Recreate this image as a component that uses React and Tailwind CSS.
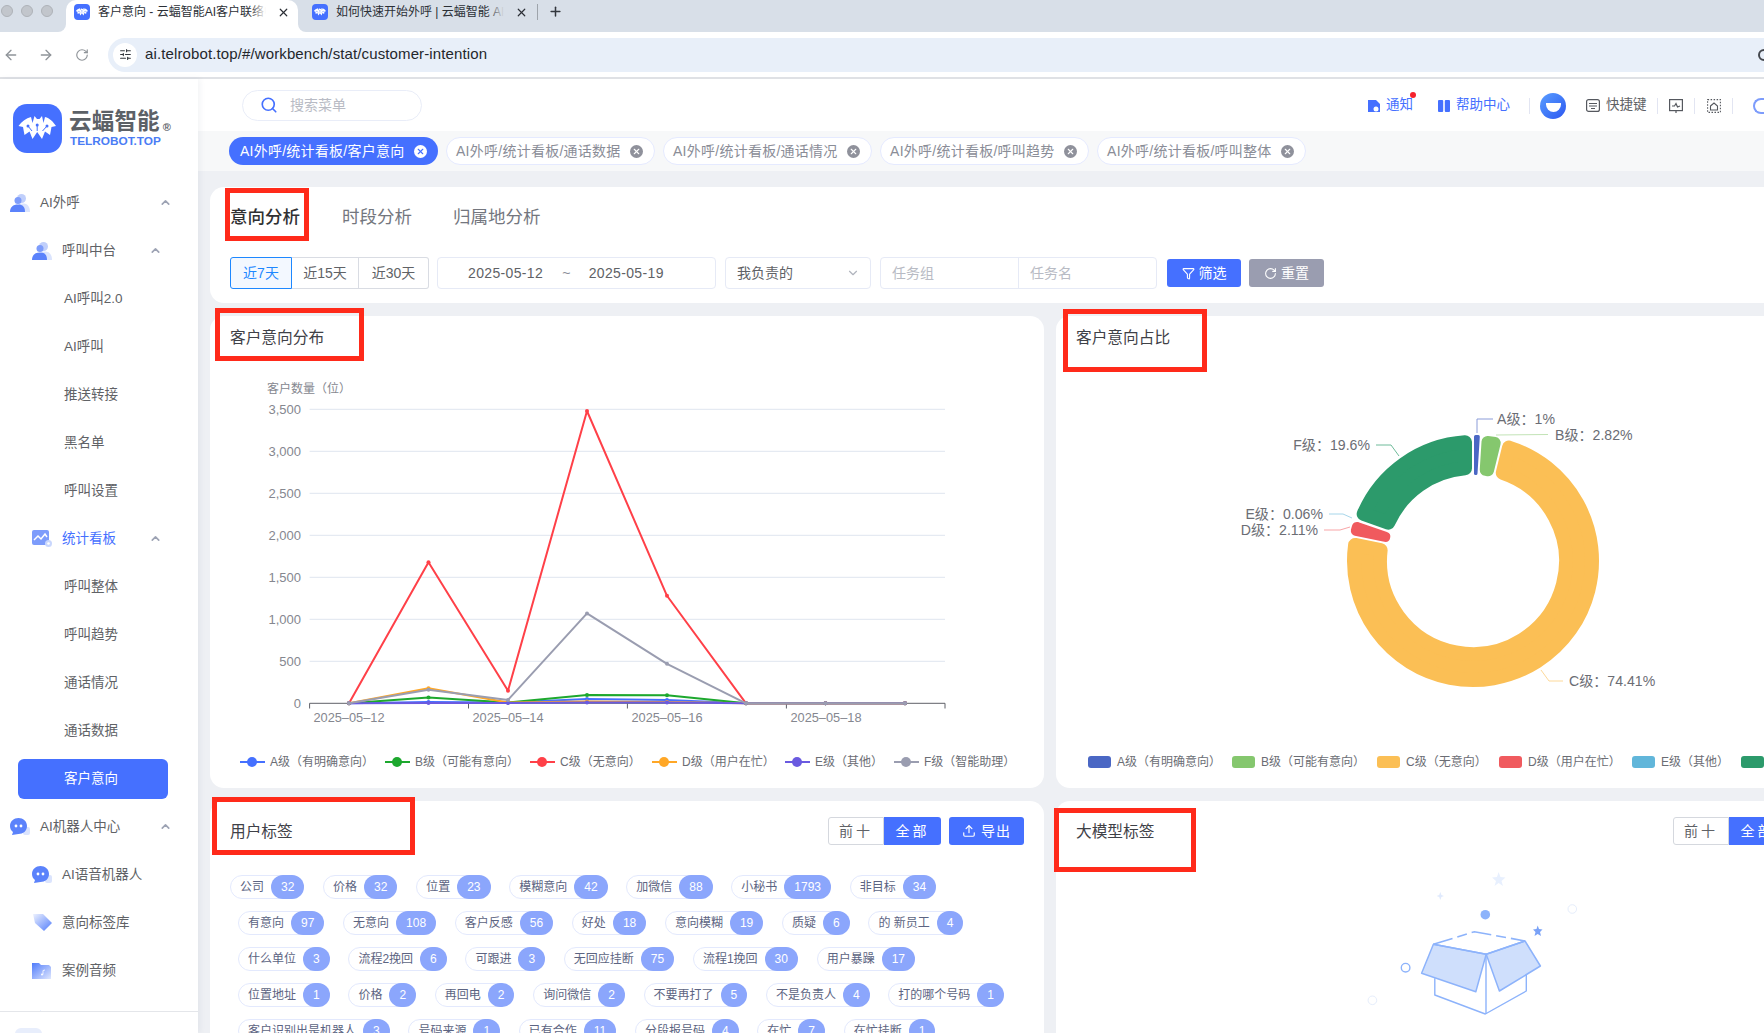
import React from "react";
import { ArrowLeft, ArrowRight, RotateCw, X, Plus, ChevronUp, ChevronDown, Filter, Upload, Search, SlidersHorizontal } from "lucide-react";

const FONT = '"Liberation Sans","Noto Sans CJK SC",sans-serif';

function Bat({ size = 49, radius = 14 }) {
  return (
    <svg width={size} height={size} viewBox="0 0 49 49" className="shrink-0">
      <rect x="0" y="0" width="49" height="49" rx={radius} fill="#4570ff" />
      <path d="M5.5 22 C9 17 13 14.5 18 13 L19.5 19 L21.5 12 L24 15 L26.5 15 L29 12 L30.5 19 L32 13 C37 14.5 39.5 17 43 22 L38.5 23 L37 31 L32 27.5 L29 35 L24.2 28 L19.5 35 L16.5 27.5 L11.5 31 L10 23 Z" fill="#fff" />
      <path d="M15 22 L19 27 M34 22 L29.5 27 M24.2 21 V27" stroke="#4570ff" strokeWidth="1" fill="none" />
      <circle cx="15" cy="22" r="1.5" fill="#4570ff" />
      <circle cx="34" cy="22" r="1.5" fill="#4570ff" />
      <circle cx="24.2" cy="21" r="1.5" fill="#4570ff" />
    </svg>
  );
}

function People() {
  return (
    <svg width="20" height="20" viewBox="0 0 20 20" className="shrink-0">
      <circle cx="11.5" cy="5.5" r="4.5" fill="#c0cffb" />
      <path d="M6 19 C6 12 9 10.5 13 10.5 C17 10.5 20 13 20 19 Z" fill="#dbe4fd" />
      <circle cx="8" cy="7.5" r="3.5" fill="#7d9cfb" />
      <path d="M0 19 C0 14 3 11.5 8 11.5 C13 11.5 15 14 15 19 Z" fill="#5b82fb" />
    </svg>
  );
}
function Stat() {
  return (
    <svg width="20" height="18" viewBox="0 0 20 18" className="shrink-0">
      <rect x="0" y="0" width="17" height="15" rx="2" fill="#7d9cfb" />
      <path d="M2 10 L6 6 L9 9 L13 4 L15 7" stroke="#fff" strokeWidth="1.5" fill="none" />
      <circle cx="16.5" cy="13.5" r="3.5" fill="#c9d7fd" />
      <circle cx="16.5" cy="13.5" r="1.3" fill="#fff" />
    </svg>
  );
}
function Robot() {
  return (
    <svg width="20" height="18" viewBox="0 0 20 18" className="shrink-0">
      <rect x="13" y="9" width="7" height="8" rx="2" fill="#dbe4fd" />
      <path d="M8.5 0 C13 0 17 3 17 8 C17 13 13 16 8.5 16 L2 17 L3 14 C1 12.5 0 10.5 0 8 C0 3 4 0 8.5 0 Z" fill="#5b82fb" />
      <circle cx="6" cy="8" r="1.4" fill="#fff" />
      <circle cx="11" cy="8" r="1.4" fill="#fff" />
    </svg>
  );
}
function TagIcon() {
  return (
    <svg width="21" height="18" viewBox="0 0 21 18" className="shrink-0">
      <defs>
        <linearGradient id="tg" x1="0" y1="0" x2="1" y2="1">
          <stop offset="0" stopColor="#eef2fe" />
          <stop offset="1" stopColor="#4f7bfb" />
        </linearGradient>
      </defs>
      <path d="M1 0 L11 0 L20 9 L12 17 L3 9 Z" fill="url(#tg)" />
    </svg>
  );
}
function FolderIcon() {
  return (
    <svg width="19" height="16" viewBox="0 0 19 16" className="shrink-0">
      <defs>
        <linearGradient id="fg" x1="0" y1="0" x2="1" y2="1">
          <stop offset="0" stopColor="#4f7bfb" />
          <stop offset="1" stopColor="#dfe7fe" />
        </linearGradient>
      </defs>
      <path d="M0 0 L7 0 L9 2 L17 2 L19 4 L19 16 L0 16 Z" fill="url(#fg)" />
      <circle cx="10" cy="11.5" r="1" fill="#fff" />
      <path d="M11 11.5 L11 7.5 L13 7" stroke="#fff" strokeWidth="0.8" fill="none" />
    </svg>
  );
}

const menu = [
  { t: "AI外呼", l: 1, icon: <People />, open: true },
  { t: "呼叫中台", l: 2, icon: <People />, open: true },
  { t: "AI呼叫2.0", l: 3 },
  { t: "AI呼叫", l: 3 },
  { t: "推送转接", l: 3 },
  { t: "黑名单", l: 3 },
  { t: "呼叫设置", l: 3 },
  { t: "统计看板", l: 2, icon: <Stat />, open: true, blue: true },
  { t: "呼叫整体", l: 3 },
  { t: "呼叫趋势", l: 3 },
  { t: "通话情况", l: 3 },
  { t: "通话数据", l: 3 },
  { t: "客户意向", l: 3, active: true },
  { t: "AI机器人中心", l: 1, icon: <Robot />, open: true },
  { t: "AI语音机器人", l: 2, icon: <Robot /> },
  { t: "意向标签库", l: 2, icon: <TagIcon /> },
  { t: "案例音频", l: 2, icon: <FolderIcon /> },
];

function MenuRow({ it }) {
  if (it.l === 3) {
    if (it.active) {
      return (
        <div className="h-[48px] flex items-center pl-[18px]">
          <div className="w-[150px] h-[40px] rounded-[6px] bg-[#4570ff] text-white flex items-center pl-[46px] text-[13.5px]">{it.t}</div>
        </div>
      );
    }
    return <div className="h-[48px] flex items-center pl-[64px] text-[13.5px] text-[#606266]">{it.t}</div>;
  }
  const pad = it.l === 1 ? "pl-[10px]" : "pl-[32px]";
  return (
    <div className={`h-[48px] flex items-center ${pad} relative text-[13.5px] ${it.blue ? "text-[#4570ff]" : "text-[#606266]"}`}>
      <div className="w-[30px] flex items-center">{it.icon}</div>
      <span>{it.t}</span>
      {it.open && (
        <ChevronUp size={13} strokeWidth={3} className={`absolute top-[17px] text-[#9da3b4] ${it.l === 1 ? "left-[159px]" : "left-[149px]"}`} />
      )}
    </div>
  );
}

function Sidebar() {
  return (
    <aside className="w-[198px] shrink-0 bg-white flex flex-col z-10 shadow-[2px_0_6px_rgba(40,50,80,0.06)] h-full">
      <div className="h-[100px] shrink-0 flex items-center pl-[13px] pb-[1px]">
        <Bat />
        <div className="ml-[7px] flex flex-col mt-[1px]">
          <div className="flex items-end leading-none">
            <span className="text-[22.5px] font-bold text-[#5c6167] tracking-[0.2px] leading-[24px]">云蝠智能</span>
            <span className="text-[11px] font-bold text-[#5c6167] ml-[3px] leading-[14px]">®</span>
          </div>
          <span className="text-[11.8px] font-bold text-[#4a7cf5] leading-[13px] mt-[1px] ml-[1px]">TELROBOT.TOP</span>
        </div>
      </div>
      <div className="flex-1 overflow-hidden min-h-0">
        {menu.map((it) => <MenuRow key={it.t} it={it} />)}
        <div className="h-[48px] flex items-center pl-[32px]">
          <svg width="20" height="20" viewBox="0 0 20 20"><path d="M3 10 L9 1 L9 20 Z" fill="#cdd9fd" /></svg>
        </div>
      </div>
      <div className="h-[22px] shrink-0 border-t border-[#e4e6ea] pl-[15px] pt-[16px] overflow-hidden">
        <div className="w-[27px] h-[20px] rounded-t-[6px] bg-[#e8eefc]"></div>
      </div>
    </aside>
  );
}

function BrowserTab({ title, active, width, textW }) {
  return (
    <div className={`relative h-[32px] flex items-center pb-[8px] shrink-0 ${active ? "bg-white rounded-t-[10px]" : ""}`} style={{ width }}>
      {active && (
        <>
          <div className="absolute bottom-0 -left-[8px] w-[8px] h-[8px] bg-white"><div className="w-full h-full bg-[#d8dfe8] rounded-br-[8px]"></div></div>
          <div className="absolute bottom-0 -right-[8px] w-[8px] h-[8px] bg-white"><div className="w-full h-full bg-[#d8dfe8] rounded-bl-[8px]"></div></div>
        </>
      )}
      <div className="ml-[8px]"><Bat size={16} radius={12} /></div>
      <div className="ml-[8px] overflow-hidden whitespace-nowrap text-[12px] text-[#2b2f36] relative" style={{ width: textW }}>
        {title}
        <div className={`absolute right-0 top-0 bottom-0 w-[16px] bg-gradient-to-r from-transparent ${active ? "to-white" : "to-[#d8dfe8]"}`}></div>
      </div>
      <X size={13} strokeWidth={2.2} className="text-[#2b2f36] ml-[11px]" />
    </div>
  );
}

function Chrome() {
  return (
    <>
      <div className="h-[32px] bg-[#d8dfe8] flex items-start shrink-0">
        <div className="flex items-center gap-[8px] pl-[1px] h-[22px] w-[66px]">
          {[0, 1, 2].map((i) => <span key={i} className="w-[12px] h-[12px] rounded-full bg-[#c2c6cc] border border-[#aeb2b8]"></span>)}
        </div>
        <BrowserTab active title="客户意向 - 云蝠智能AI客户联络中心" width={232} textW={168} />
        <div className="w-[6px]"></div>
        <BrowserTab title="如何快速开始外呼 | 云蝠智能 AI客户" width={234} textW={168} />
        <div className="w-px h-[16px] bg-[#9ea4ab] mt-[4px] ml-[-1px]"></div>
        <Plus size={15} strokeWidth={2.4} className="text-[#33373d] ml-[10px] mt-[4px]" />
      </div>
      <div className="h-[47px] bg-white border-b-2 border-[#dfe1e5] flex items-center shrink-0 relative">
        <ArrowLeft size={16} className="text-[#8f9499] ml-[3px]" />
        <ArrowRight size={16} className="text-[#8f9499] ml-[19px]" />
        <RotateCw size={14} className="text-[#8f9499] ml-[21px]" />
        <div className="ml-[19px] flex-1 h-[34px] rounded-l-full bg-[#e8eff9] flex items-center pl-[5px]">
          <div className="w-[24px] h-[24px] rounded-full bg-white flex items-center justify-center">
            <SlidersHorizontal size={13} className="text-[#33373d]" />
          </div>
          <span className="ml-[8px] text-[15px] tracking-[0.12px] text-[#24272c]">ai.telrobot.top/#/workbench/stat/customer-intention</span>
          <div className="ml-auto w-[12px] h-[12px] rounded-full border-2 border-[#44484e] mr-[-6px]"></div>
        </div>
      </div>
    </>
  );
}

function Sep() {
  return <span className="w-px h-[16px] bg-[#e2e5f2] shrink-0"></span>;
}

function TopBar() {
  return (
    <div className="h-[52px] bg-white flex items-center shrink-0 pl-[44px] overflow-hidden">
      <div className="w-[180px] h-[31px] rounded-full border border-[#e9edf8] flex items-center pl-[17px] shrink-0">
        <Search size={18} strokeWidth={2.2} className="text-[#4570ff]" />
        <span className="ml-[12px] text-[14px] text-[#b8bbc4]">搜索菜单</span>
      </div>
      <div className="ml-auto flex items-center shrink-0 text-[13.5px] pt-[1px]">
        <div className="w-[70px] flex items-center text-[#4570ff] relative">
          <svg width="12" height="12" viewBox="0 0 12 12"><path d="M0 0 H8 L12 4 V12 H0 Z" fill="#4570ff" /><circle cx="8" cy="9" r="2.5" fill="#fff" /></svg>
          <span className="ml-[6px]">通知</span>
          <span className="absolute left-[42px] -top-[3px] w-[6px] h-[6px] rounded-full bg-[#f5222d]"></span>
        </div>
        <div className="w-[91px] flex items-center text-[#4570ff]">
          <svg width="12" height="12" viewBox="0 0 12 12"><rect x="0" y="0" width="5.2" height="12" rx="1" fill="#4570ff" /><rect x="6.8" y="0" width="5.2" height="12" rx="1" fill="#4570ff" /></svg>
          <span className="ml-[6px]">帮助中心</span>
        </div>
        <Sep />
        <div className="ml-[10px] w-[26px] h-[26px] rounded-full bg-gradient-to-br from-[#5b9dff] to-[#2f55f0] flex items-center justify-center">
          <span className="w-[15px] h-[9px] rounded-b-full rounded-t-[5px] bg-white mt-[3px]"></span>
        </div>
        <div className="ml-[10px]"><Sep /></div>
        <div className="ml-[10px] w-[71px] flex items-center text-[#606266]">
          <svg width="14" height="13" viewBox="0 0 14 13" fill="none" stroke="#55585e" strokeWidth="1.2"><rect x="0.6" y="0.6" width="12.8" height="11.8" rx="2" /><path d="M3 4.5 H11 M3 7 H11 M5 9.5 H9" /></svg>
          <span className="ml-[6px]">快捷键</span>
        </div>
        <Sep />
        <div className="ml-[11px] mr-[11px]">
          <svg width="14" height="14" viewBox="0 0 14 14" fill="none" stroke="#55585e" strokeWidth="1.2"><rect x="0.6" y="0.6" width="12.8" height="11" /><path d="M3 7 L5.5 7 L7 4.5 L8.5 8 L11 7 M7 12 V14" /></svg>
        </div>
        <Sep />
        <div className="ml-[12px] mr-[11px]">
          <svg width="14" height="14" viewBox="0 0 14 14" fill="none" stroke="#55585e" strokeWidth="1.1"><rect x="0.6" y="0.6" width="12.8" height="12.8" strokeDasharray="1.5 1.5" /><path d="M3.5 7 L7 4 L10.5 7 V11 H3.5 Z" /></svg>
        </div>
        <Sep />
        <div className="ml-[19px]"><Sep /></div>
        <div className="ml-[1px] w-[11px] h-[16px] rounded-l-full border-l-2 border-y-2 border-[#7d9cfb]"></div>
      </div>
    </div>
  );
}

const tags = ["AI外呼/统计看板/客户意向", "AI外呼/统计看板/通话数据", "AI外呼/统计看板/通话情况", "AI外呼/统计看板/呼叫趋势", "AI外呼/统计看板/呼叫整体"];

function TagBar() {
  return (
    <div className="h-[40px] bg-[#f7f8f9] flex items-center gap-[8.5px] pl-[31px] shrink-0">
      {tags.map((t, i) => (
        <div key={t} className={`h-[28px] rounded-full flex items-center text-[14px] tracking-[0.25px] whitespace-nowrap ${i === 0 ? "pl-[11px] pr-[11px] bg-[#4570ff] text-white" : "pl-[9px] pr-[11px] bg-white border border-[#e5eaff] text-[#8a8d97]"}`}>
          {t}
          <span className={`ml-[9px] w-[13px] h-[13px] rounded-full flex items-center justify-center ${i === 0 ? "bg-white text-[#4570ff]" : "bg-[#8f919b] text-white"}`}>
            <X size={9} strokeWidth={3} />
          </span>
        </div>
      ))}
    </div>
  );
}

function FilterCard() {
  return (
    <div className="w-[1600px] h-[116px] bg-white rounded-l-[14px] pl-[20px] shrink-0">
      <div className="h-[60px] flex items-center text-[17.5px] text-[#73767e]">
        <span className="text-[#303133] font-medium">意向分析</span>
        <span className="ml-[42px]">时段分析</span>
        <span className="ml-[41px]">归属地分析</span>
      </div>
      <div className="mt-[10px] flex items-center h-[32px] text-[14px]">
        <div className="w-[62px] h-[32px] border border-[#1e88ff] rounded-l-[3px] bg-[#f3f8ff] text-[#1e88ff] flex items-center justify-center">近7天</div>
        <div className="w-[67px] h-[32px] border-y border-r border-[#d9dce3] text-[#606266] flex items-center justify-center">近15天</div>
        <div className="w-[70px] h-[32px] border-y border-r border-[#d9dce3] rounded-r-[3px] text-[#606266] flex items-center justify-center">近30天</div>
        <div className="ml-[8px] w-[279px] h-[32px] border border-[#e6eaf6] rounded-[4px] text-[#606266] flex items-center pl-[30px] tracking-[0.35px]">
          <span>2025-05-12</span>
          <span className="ml-[19px] text-[#8a8d97]">~</span>
          <span className="ml-[18px]">2025-05-19</span>
        </div>
        <div className="ml-[9px] w-[146px] h-[32px] border border-[#e6eaf6] rounded-[4px] text-[#606266] flex items-center pl-[11px] pr-[10px] justify-between">
          <span>我负责的</span>
          <ChevronDown size={14} className="text-[#b0b4bd]" />
        </div>
        <div className="ml-[9px] w-[277px] h-[32px] border border-[#e6eaf6] rounded-[4px] text-[#b8bbc4] flex items-center">
          <span className="w-[138px] h-full flex items-center pl-[11px] border-r border-[#e6eaf6]">任务组</span>
          <span className="pl-[11px]">任务名</span>
        </div>
        <div className="ml-[10px] w-[74px] h-[28px] rounded-[3px] bg-[#4570ff] text-white flex items-center justify-center gap-[4px]">
          <Filter size={13} /> <span>筛选</span>
        </div>
        <div className="ml-[8px] w-[75px] h-[28px] rounded-[3px] bg-[#9a9db0] text-white flex items-center justify-center gap-[4px]">
          <RotateCw size={13} /> <span>重置</span>
        </div>
      </div>
    </div>
  );
}

const X_POS = [349, 428.5, 508, 587, 667, 746, 825.5, 905];
const SERIES = [
  { c: "#4570ff", v: [0, 15, 10, 50, 40, 0, 0, 0] },
  { c: "#1da82e", v: [0, 70, 10, 100, 95, 0, 0, 0] },
  { c: "#ff4048", v: [0, 1680, 150, 3480, 1280, 0, 0, 0] },
  { c: "#ffa726", v: [0, 180, 10, 20, 15, 0, 0, 0] },
  { c: "#6a5ae0", v: [0, 5, 5, 10, 10, 0, 0, 0] },
  { c: "#9a9db0", v: [0, 160, 40, 1070, 470, 0, 0, 0] },
];
const yOf = (v) => 703.3 - (v * 294) / 3500;

function LineChart() {
  return (
    <svg width="834" height="375" viewBox="210 360 834 375" className="block" style={{ fontFamily: FONT }}>
      <text x="267" y="393" fontSize="12" fill="#85878f">客户数量（位）</text>
      {[0, 500, 1000, 1500, 2000, 2500, 3000, 3500].map((v) => (
        <g key={v}>
          {v > 0 && <line x1="309.6" x2="945" y1={yOf(v)} y2={yOf(v)} stroke="#dfe5ef" strokeWidth="1" />}
          <text x="301" y={yOf(v) + 4.5} fontSize="13" textAnchor="end" fill="#85878f">{v.toLocaleString("en-US")}</text>
        </g>
      ))}
      <line x1="309.6" x2="945" y1="703.3" y2="703.3" stroke="#5f6168" strokeWidth="1" />
      {[309.6, 468.5, 627.4, 786.4, 945].map((x) => (
        <line key={x} x1={x} x2={x} y1="703.3" y2="708.5" stroke="#5f6168" strokeWidth="1" />
      ))}
      {[["2025–05–12", 349], ["2025–05–14", 508], ["2025–05–16", 667], ["2025–05–18", 826]].map(([t, x]) => (
        <text key={t} x={x} y="722" fontSize="12.8" textAnchor="middle" fill="#85878f">{t}</text>
      ))}
      {SERIES.map((s) => (
        <g key={s.c}>
          <polyline points={s.v.map((v, i) => `${X_POS[i]},${yOf(v)}`).join(" ")} fill="none" stroke={s.c} strokeWidth="2" strokeLinejoin="round" />
          {s.v.map((v, i) => <circle key={i} cx={X_POS[i]} cy={yOf(v)} r="2" fill={s.c} />)}
        </g>
      ))}
    </svg>
  );
}

const pol = (r, deg) => {
  const a = (deg * Math.PI) / 180;
  return [1473 + r * Math.sin(a), 561 - r * Math.cos(a)];
};
function sector(a0, a1, c) {
  const r0 = 86 + c;
  const r1 = 126 - c;
  const g = 1 + c;
  const d1 = ((g / r1) * 180) / Math.PI;
  const d0 = ((g / r0) * 180) / Math.PI;
  const large = a1 - a0 > 180 ? 1 : 0;
  const p1 = pol(r1, a0 + d1);
  const p2 = pol(r1, a1 - d1);
  const p3 = pol(r0, a1 - d0);
  const p4 = pol(r0, a0 + d0);
  return `M${p1[0]} ${p1[1]} A${r1} ${r1} 0 ${large} 1 ${p2[0]} ${p2[1]} L${p3[0]} ${p3[1]} A${r0} ${r0} 0 ${large} 0 ${p4[0]} ${p4[1]} Z`;
}
const SECT = [
  { a: 0, b: 3.6, c: 1.6, col: "#4a67c4" },
  { a: 3.6, b: 13.75, c: 6, col: "#85c76e" },
  { a: 13.75, b: 281.6, c: 7, col: "#fbbf55" },
  { a: 281.6, b: 289.2, c: 5, col: "#f05a5e" },
  { a: 289.4, b: 360, c: 7, col: "#2c9a6b" },
];

function Donut() {
  const lab = { fontSize: 14.1, fill: "#6b6d74" };
  return (
    <svg width="835" height="375" viewBox="1056 360 835 375" className="block" style={{ fontFamily: FONT }}>
      {SECT.map((s) => <path key={s.col} d={sector(s.a, s.b, s.c)} fill={s.col} stroke={s.col} strokeWidth={s.c * 2} strokeLinejoin="round" />)}
      <polyline points="1477,433 1477,419 1493,419" fill="none" stroke="#8b9cd8" />
      <text x="1497" y="424" {...lab}>A级：1%</text>
      <polyline points="1496,435 1548,434.5" fill="none" stroke="#c2e3b6" />
      <text x="1555" y="440" {...lab}>B级：2.82%</text>
      <polyline points="1541,670 1549,681 1563,681" fill="none" stroke="#fdd99a" />
      <text x="1569" y="686" {...lab}>C级：74.41%</text>
      <polyline points="1324,530 1340,530 1350,527" fill="none" stroke="#f8a5a7" />
      <text x="1318" y="535" textAnchor="end" {...lab}>D级：2.11%</text>
      <polyline points="1329,514 1343,514 1352,518" fill="none" stroke="#a7d6ea" />
      <text x="1323" y="519" textAnchor="end" {...lab}>E级：0.06%</text>
      <polyline points="1376,445 1391,445 1399,456" fill="none" stroke="#6fbb9a" />
      <text x="1370" y="450" textAnchor="end" {...lab}>F级：19.6%</text>
    </svg>
  );
}

const LEG1 = [
  ["A级（有明确意向）", "#4570ff", 145],
  ["B级（可能有意向）", "#1da82e", 145],
  ["C级（无意向）", "#ff4048", 122],
  ["D级（用户在忙）", "#ffa726", 133],
  ["E级（其他）", "#6a5ae0", 109],
  ["F级（智能助理）", "#9a9db0", 120],
];
const LEG2 = [
  ["A级（有明确意向）", "#4a67c4", 144],
  ["B级（可能有意向）", "#85c76e", 145],
  ["C级（无意向）", "#fbbf55", 122],
  ["D级（用户在忙）", "#f05a5e", 133],
  ["E级（其他）", "#61b6da", 109],
  ["F级（智能助理）", "#2c9a6b", 120],
];

function LineLegend() {
  return (
    <div className="mt-[17px] h-[20px] flex items-center pl-[30px] text-[12px] text-[#6b6d74]">
      {LEG1.map(([t, c, w]) => (
        <div key={t} className="flex items-center shrink-0 whitespace-nowrap" style={{ width: w }}>
          <span className="relative w-[25px] h-[2px] shrink-0" style={{ background: c }}>
            <span className="absolute left-[7px] -top-[4px] w-[10px] h-[10px] rounded-full" style={{ background: c }}></span>
          </span>
          <span className="ml-[5px]">{t}</span>
        </div>
      ))}
    </div>
  );
}
function DonutLegend() {
  return (
    <div className="mt-[17px] h-[20px] flex items-center pl-[32px] text-[12px] text-[#6b6d74]">
      {LEG2.map(([t, c, w]) => (
        <div key={t} className="flex items-center shrink-0 whitespace-nowrap" style={{ width: w }}>
          <span className="w-[23px] h-[12px] rounded-[3px] shrink-0" style={{ background: c }}></span>
          <span className="ml-[6px]">{t}</span>
        </div>
      ))}
    </div>
  );
}

const CHIPS = [
  [["公司", 32], ["价格", 32], ["位置", 23], ["模糊意向", 42], ["加微信", 88], ["小秘书", 1793], ["非目标", 34]],
  [["有意向", 97], ["无意向", 108], ["客户反感", 56], ["好处", 18], ["意向模糊", 19], ["质疑", 6], ["的 新员工", 4]],
  [["什么单位", 3], ["流程2挽回", 6], ["可跟进", 3], ["无回应挂断", 75], ["流程1挽回", 30], ["用户暴躁", 17]],
  [["位置地址", 1], ["价格", 2], ["再回电", 2], ["询问微信", 2], ["不要再打了", 5], ["不是负责人", 4], ["打的哪个号码", 1]],
  [["客户识别出是机器人", 3], ["号码来源", 1], ["已有合作", 11], ["分段报号码", 4], ["在忙", 7], ["在忙挂断", 1]],
];

function Chip({ t, n }) {
  return (
    <div className="h-[24px] rounded-full border border-[#e3e9fd] flex items-center pl-[9px] text-[12px] text-[#5c6482] whitespace-nowrap shrink-0">
      {t}
      <span className="ml-[7px] h-[24px] -mr-px px-[10px] rounded-full bg-[#8ba6fc] text-white flex items-center">{n}</span>
    </div>
  );
}

function Seg() {
  return (
    <div className="flex h-[28px] text-[14px] tracking-[3px] shrink-0">
      <div className="w-[56px] border border-[#d5d8de] rounded-l-[3px] text-[#606266] flex items-center justify-center">前十</div>
      <div className="w-[57px] bg-[#4570ff] text-white rounded-r-[3px] flex items-center justify-center">全部</div>
    </div>
  );
}

function UserTags() {
  return (
    <div className="w-[834px] shrink-0 bg-white rounded-t-[14px] pt-[16px] h-[260px] overflow-hidden">
      <div className="flex items-center pl-[20px] pr-[20px] h-[28px]">
        <span className="text-[15.7px] text-[#3f4147] pt-[1px]">用户标签</span>
        <div className="ml-auto flex items-center">
          <Seg />
          <div className="ml-[8px] w-[75px] h-[28px] rounded-[3px] bg-[#4570ff] text-white text-[14px] tracking-[1px] flex items-center justify-center gap-[5px]">
            <Upload size={14} /> 导出
          </div>
        </div>
      </div>
      <div className="mt-[30px] pl-[20px] flex flex-col gap-y-[12px]">
        {CHIPS.map((row, i) => (
          <div key={i} className={`flex gap-x-[18.7px] ${i === 0 ? "" : "pl-[8px]"}`}>
            {row.map(([t, n]) => <Chip key={t} t={t} n={n} />)}
          </div>
        ))}
      </div>
    </div>
  );
}

function EmptyBox() {
  const line = "#8db3fb";
  return (
    <svg width="240" height="173" viewBox="1360 860 240 173" className="block ml-[304px]">
      <path d="M1498.6 872 L1500.5 877 L1505.5 877.5 L1501.5 881 L1503 886 L1498.6 883 L1494.5 886 L1496 881 L1492 877.5 L1497 877 Z" fill="#e8f0fe" />
      <path d="M1440.3 892 L1441.4 895 L1444 896 L1441.4 897 L1440.3 900 L1439.2 897 L1436.6 896 L1439.2 895 Z" fill="#e0eafd" />
      <circle cx="1485.3" cy="914.7" r="4.8" fill="#8db3fb" />
      <path d="M1537.7 925.5 L1539 929 L1542.5 929.5 L1540 932 L1541 936 L1537.7 934 L1534.5 936 L1535.5 932 L1533 929.5 L1536.5 929 Z" fill="#7aa2f7" />
      <circle cx="1572.3" cy="909" r="4.3" fill="none" stroke="#e6eefc" strokeWidth="1" />
      <circle cx="1372.4" cy="1000.3" r="4.3" fill="none" stroke="#e6eefc" strokeWidth="1" />
      <circle cx="1405.6" cy="967.7" r="4.3" fill="none" stroke={line} strokeWidth="1.4" />
      <path d="M1433.4 944.3 L1474.4 931.7 L1525 941" fill="none" stroke={line} strokeWidth="1.6" strokeDasharray="20 5 10 5" />
      <path d="M1434.8 978.3 V995 L1485.3 1014 L1526.3 991 V975" fill="#fff" stroke={line} strokeWidth="1.4" strokeLinejoin="round" />
      <path d="M1486 954 V1014" stroke={line} strokeWidth="1.4" />
      <path d="M1433.4 944.3 L1486.2 954.3 L1475.8 991.7 L1421.6 973.3 Z" fill="#cfdffc" stroke={line} strokeWidth="1.5" strokeLinejoin="round" />
      <path d="M1486.2 954.3 L1525 941 L1540.4 966 L1499.4 991 Z" fill="#cfdffc" stroke={line} strokeWidth="1.5" strokeLinejoin="round" />
      <path d="M1525 941 L1486.2 954.3 L1433.4 944.3" fill="none" stroke={line} strokeWidth="1.5" />
    </svg>
  );
}

function ModelTags() {
  return (
    <div className="w-[835px] shrink-0 bg-white rounded-t-[14px] pt-[16px] h-[260px] overflow-hidden">
      <div className="flex items-center pl-[20px] h-[28px]">
        <span className="text-[15.7px] text-[#3f4147] w-[80px] whitespace-nowrap pt-[1px]">大模型标签</span>
        <div className="ml-[517px]"><Seg /></div>
      </div>
      <div className="mt-[15px]"><EmptyBox /></div>
    </div>
  );
}

const BOXES = [
  "left-[225px] top-[188px] w-[84px] h-[53px]",
  "left-[215px] top-[308px] w-[149px] h-[53px]",
  "left-[1063px] top-[309px] w-[144px] h-[63px]",
  "left-[212px] top-[797px] w-[203px] h-[58px]",
  "left-[1054px] top-[808px] w-[142px] h-[64px]",
];

export default function App() {
  return (
    <div className="relative w-[1764px] h-[1033px] overflow-hidden bg-white flex flex-col" style={{ fontFamily: FONT }}>
      <Chrome />
      <div className="flex-1 flex min-h-0">
        <Sidebar />
        <main className="flex-1 min-w-0 flex flex-col">
          <TopBar />
          <TagBar />
          <div className="flex-1 min-h-0 bg-[#eef0f4] pl-[12px] pt-[16px] flex flex-col gap-[13px] overflow-hidden">
            <FilterCard />
            <div className="flex gap-[12px] shrink-0">
              <div className="w-[834px] h-[472px] bg-white rounded-[14px] shrink-0">
                <div className="h-[44px] flex items-center pl-[20px] text-[15.7px] text-[#3f4147]">客户意向分布</div>
                <LineChart />
                <LineLegend />
              </div>
              <div className="w-[835px] h-[472px] bg-white rounded-l-[14px] shrink-0">
                <div className="h-[44px] flex items-center pl-[20px] text-[15.7px] text-[#3f4147]">客户意向占比</div>
                <Donut />
                <DonutLegend />
              </div>
            </div>
            <div className="flex gap-[12px] shrink-0">
              <UserTags />
              <ModelTags />
            </div>
          </div>
        </main>
      </div>
      {BOXES.map((b) => <div key={b} className={`absolute border-[5px] border-[#ff2a1a] ${b}`}></div>)}
    </div>
  );
}
